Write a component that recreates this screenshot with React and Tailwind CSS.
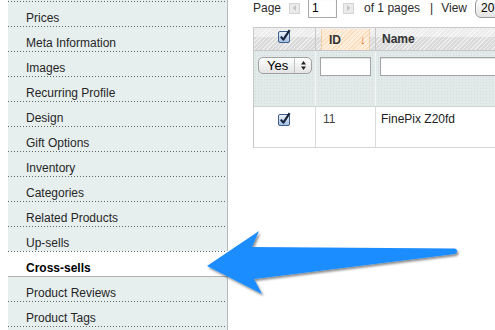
import React from "react";

const items = [
  "Prices",
  "Meta Information",
  "Images",
  "Recurring Profile",
  "Design",
  "Gift Options",
  "Inventory",
  "Categories",
  "Related Products",
  "Up-sells",
  "Cross-sells",
  "Product Reviews",
  "Product Tags",
];

const Dots = () => (
  <div className="h-px mr-[2px] bg-[repeating-linear-gradient(to_right,#5e6666_0_1px,transparent_1px_3px)]" />
);

const MacCheck = ({ id }) => (
  <svg width="13" height="14" viewBox="0 0 13 14">
    <defs>
      <linearGradient id={id} x1="0" y1="0" x2="0" y2="1">
        <stop offset="0" stopColor="#eef5fc" />
        <stop offset="1" stopColor="#9fbde3" />
      </linearGradient>
    </defs>
    <rect x="0.5" y="2.5" width="11" height="11" rx="1.5" fill={`url(#${id})`} stroke="#3f5f86" />
    <path d="M2.8 7.6 L5.4 10.6 L11.6 1.2" stroke="#16233b" strokeWidth="2.1" fill="none" strokeLinejoin="round" />
  </svg>
);

const PagerBtn = ({ dir }) => (
  <div className="w-[11px] h-[11px] bg-[#ebebeb] border border-[#d4d4d4] flex items-center justify-center">
    <svg width="5" height="6" viewBox="0 0 5 6">
      {dir === "left" ? (
        <path d="M4 0 L0.5 3 L4 6 Z" fill="#c4c4c4" />
      ) : (
        <path d="M1 0 L4.5 3 L1 6 Z" fill="#c4c4c4" />
      )}
    </svg>
  </div>
);

export default function App() {
  return (
    <div className="relative w-[495px] h-[330px] overflow-hidden bg-white flex font-['Liberation_Sans',Arial,sans-serif] text-[12px]">
      {/* Sidebar */}
      <div className="ml-[8px] w-[220px] shrink-0 flex flex-col">
        <div className="h-[3px] bg-[#e6eeee] border-r border-[#b3bcbc]" />
        {items.map((t) => {
          const active = t === "Cross-sells";
          const afterActive = t === "Product Reviews";
          return (
            <div
              key={t}
              className={
                active
                  ? "bg-white"
                  : "bg-[#e6eeee] border-r border-[#b3bcbc]"
              }
            >
              {afterActive ? <div className="h-px bg-[#b0b0b0]" /> : <Dots />}
              <div
                className={
                  "h-[24px] flex items-center pl-[18px] pt-[8px] " +
                  (active ? "font-bold text-black" : "text-[#262626]")
                }
              >
                {t}
              </div>
            </div>
          );
        })}
        <div className="bg-[#e6eeee] border-r border-[#b3bcbc] h-[20px]">
          <Dots />
        </div>
      </div>

      {/* Content */}
      <div className="ml-[25px] flex flex-col text-[#2b2b2b]">
        <div className="h-[16px] flex items-center whitespace-nowrap">
          <span>Page</span>
          <div className="ml-[8px]">
            <PagerBtn dir="left" />
          </div>
          <div className="ml-[8px] w-[29px] h-[20px] border border-[#a8a8a8] shadow-[inset_0_1px_1px_rgba(0,0,0,0.15)] bg-white flex items-center pl-[3px] text-black">
            1
          </div>
          <div className="ml-[6px]">
            <PagerBtn dir="right" />
          </div>
          <span className="ml-[10px]">of 1 pages</span>
          <span className="ml-[10px]">|</span>
          <span className="ml-[8px]">View</span>
          <div className="ml-[8px] w-[40px] h-[20px] rounded-l-[6px] border border-[#9a9a9a] bg-[linear-gradient(to_bottom,#ffffff,#e4e4e4)] flex items-center pl-[5px] text-black">
            20
          </div>
        </div>

        {/* Grid */}
        <div className="mt-[11px] w-[300px] border-l border-t border-[#c8c8c8]">
          {/* header */}
          <div className="grid grid-cols-[62px_60px_1fr] h-[23px] border-b border-[#c6c6c6] bg-[repeating-linear-gradient(135deg,rgba(255,255,255,0.55)_0_1px,transparent_1px_3px),linear-gradient(to_bottom,#ececec_0_42%,#dadada_42%_100%)]">
            <div className="border-r border-[#c8c8c8] flex justify-center pt-[1px]">
              <MacCheck id="cbh" />
            </div>
            <div className="border-r border-[#c8c8c8] px-[5px] pt-[1px]">
              <div className="h-[21px] border-l border-r border-[#f1cfa8] bg-[repeating-linear-gradient(135deg,#fbdcbb_0_1px,#fdeedd_1px_3px)] flex items-center pl-[7px] pr-[3px] justify-between">
                <span className="font-bold text-[#333]">ID</span>
                <span className="text-[#e8742a] text-[13px] leading-none">↓</span>
              </div>
            </div>
            <div className="flex items-center pl-[6px] font-bold text-[#333]">Name</div>
          </div>
          {/* filter */}
          <div className="grid grid-cols-[62px_60px_1fr] h-[56px] bg-[#e1e9e9] bg-[radial-gradient(#d3dddd_0.6px,transparent_0.8px)] bg-[length:3px_3px] border-b border-[#cdd5d5]">
            <div className="border-r border-[#f2f5f5] pt-[6px] pl-[4px]">
              <div className="w-[54px] h-[17px] rounded-[5px] border border-[#a0a0a0] bg-[linear-gradient(to_bottom,#ffffff,#e3e3e3)] flex items-center text-[13px] text-black">
                <span className="pl-[8px] w-[35px]">Yes</span>
                <div className="h-full border-l border-[#c4c4c4]" />
                <svg className="ml-[6px]" width="5" height="9" viewBox="0 0 5 9">
                  <path d="M2.5 0 L5 3.5 L0 3.5 Z" fill="#222" />
                  <path d="M2.5 9 L5 5.5 L0 5.5 Z" fill="#222" />
                </svg>
              </div>
            </div>
            <div className="border-r border-[#f2f5f5] pt-[6px] pl-[4px]">
              <div className="w-[51px] h-[19px] border border-[#a4a4a4] bg-white shadow-[inset_0_1px_1px_rgba(0,0,0,0.12)]" />
            </div>
            <div className="pt-[6px] pl-[4px]">
              <div className="w-[200px] h-[19px] border border-[#a4a4a4] bg-white shadow-[inset_0_1px_1px_rgba(0,0,0,0.12)]" />
            </div>
          </div>
          {/* data row */}
          <div className="grid grid-cols-[62px_60px_1fr] h-[41px] border-b border-[#d6d6d6] bg-white">
            <div className="border-r border-[#dadada] flex justify-center pt-[5px]">
              <MacCheck id="cbr" />
            </div>
            <div className="border-r border-[#dadada] pl-[7px] pt-[3px] text-[#444]">11</div>
            <div className="pl-[5px] pt-[3px] text-[#222]">FinePix Z20fd</div>
          </div>
        </div>
      </div>

      {/* Annotation arrow overlay */}
      <svg className="absolute inset-0 pointer-events-none" width="495" height="330" viewBox="0 0 495 330">
        <defs>
          <filter id="sh" x="-10%" y="-30%" width="130%" height="160%">
            <feDropShadow dx="1.5" dy="2" stdDeviation="1.3" floodColor="#000" floodOpacity="0.45" />
          </filter>
        </defs>
        <path
          d="M207 266 L259 231 L252 247 L455 248.5 Q459.5 251.2 455 254 L254 279 L262 294 Z"
          fill="#1c8dff"
          filter="url(#sh)"
        />
      </svg>
    </div>
  );
}
